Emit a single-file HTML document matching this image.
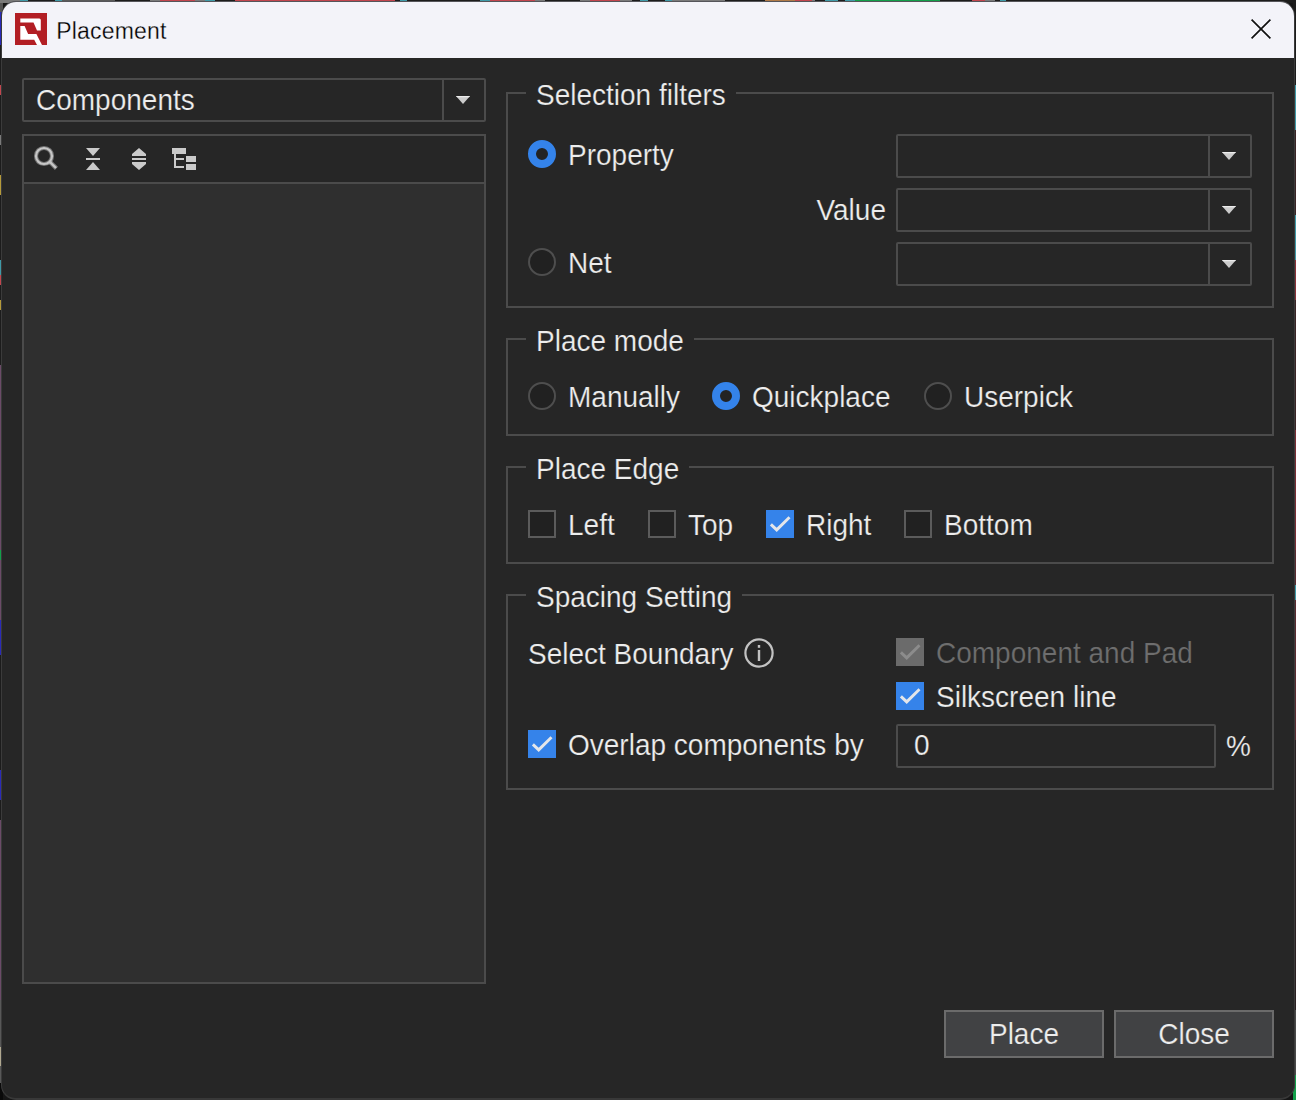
<!DOCTYPE html>
<html lang="en">
<head>
<meta charset="utf-8">
<title>Placement</title>
<style>
html,body{margin:0;padding:0;}
body{width:1296px;height:1100px;position:relative;overflow:hidden;background:#161616;
  font-family:"Liberation Sans",Arial,sans-serif;font-size:28px;color:#ededed;}
.abs{position:absolute;box-sizing:border-box;}
#edge-top{left:0;top:0;width:1296px;height:3px;background:linear-gradient(to right,#7a7a7a 0px,#7a7a7a 20px,#3f9aa8 20px,#3f9aa8 28px,#1c1c1c 28px,#1c1c1c 55px,#3f9aa8 55px,#3f9aa8 62px,#5a5a5a 62px,#5a5a5a 115px,#1c1c1c 115px,#1c1c1c 150px,#7a7a7a 150px,#7a7a7a 160px,#c2464e 160px,#c2464e 195px,#7a7a7a 195px,#7a7a7a 205px,#3f9aa8 205px,#3f9aa8 215px,#1c1c1c 215px,#1c1c1c 235px,#c2464e 235px,#c2464e 395px,#1c1c1c 395px,#1c1c1c 400px,#3f9aa8 400px,#3f9aa8 407px,#1c1c1c 407px,#1c1c1c 480px,#3f9aa8 480px,#3f9aa8 490px,#c2464e 490px,#c2464e 535px,#7a7a7a 535px,#7a7a7a 545px,#1c1c1c 545px,#1c1c1c 580px,#7a7a7a 580px,#7a7a7a 590px,#c2464e 590px,#c2464e 620px,#7a7a7a 620px,#7a7a7a 632px,#1c1c1c 632px,#1c1c1c 640px,#3f9aa8 640px,#3f9aa8 648px,#1c1c1c 648px,#1c1c1c 665px,#3f9aa8 665px,#3f9aa8 672px,#7a7a7a 672px,#7a7a7a 725px,#1c1c1c 725px,#1c1c1c 765px,#b07a48 765px,#b07a48 795px,#c2464e 795px,#c2464e 812px,#7a7a7a 812px,#7a7a7a 815px,#1c1c1c 815px,#1c1c1c 825px,#3f9aa8 825px,#3f9aa8 838px,#1c1c1c 838px,#1c1c1c 845px,#3f9aa8 845px,#3f9aa8 855px,#12a04a 855px,#12a04a 940px,#1c1c1c 940px,#1c1c1c 972px,#c2464e 972px,#c2464e 985px,#7a7a7a 985px,#7a7a7a 995px,#1c1c1c 995px,#1c1c1c 1000px,#3f9aa8 1000px,#3f9aa8 1006px,#1c1c1c 1006px,#1c1c1c 1296px);}
#edge-left{left:0;top:3px;width:3px;height:1097px;background:linear-gradient(to bottom,#555 0px,#555 12px,#2a2ab8 12px,#2a2ab8 45px,#1c1c1c 45px,#1c1c1c 85px,#c2464e 85px,#c2464e 95px,#1c1c1c 95px,#1c1c1c 135px,#7a7a7a 135px,#7a7a7a 145px,#1c1c1c 145px,#1c1c1c 175px,#b59a3a 175px,#b59a3a 195px,#1c1c1c 195px,#1c1c1c 260px,#3f9aa8 260px,#3f9aa8 275px,#c2464e 275px,#c2464e 285px,#1c1c1c 285px,#1c1c1c 300px,#b59a3a 300px,#b59a3a 310px,#1c1c1c 310px,#1c1c1c 365px,#6b4b68 365px,#6b4b68 550px,#12a04a 550px,#12a04a 560px,#6b4b68 560px,#6b4b68 620px,#2a2ab8 620px,#2a2ab8 655px,#1c1c1c 655px,#1c1c1c 770px,#2a2ab8 770px,#2a2ab8 800px,#1c1c1c 800px,#1c1c1c 820px,#6b4b68 820px,#6b4b68 1000px,#585858 1000px,#585858 1047px,#b0a890 1047px,#b0a890 1066px,#585858 1066px,#585858 1083px,#0a0a0a 1083px,#0a0a0a 1100px);background-position:0 -3px;background-size:3px 1100px;}
#edge-right{left:1293px;top:3px;width:3px;height:1097px;background:linear-gradient(to bottom,#1c1c1c 0px,#1c1c1c 85px,#3f9aa8 85px,#3f9aa8 130px,#3a2426 130px,#3a2426 215px,#3f9aa8 215px,#3f9aa8 260px,#8a3038 260px,#8a3038 300px,#3a2426 300px,#3a2426 430px,#7a2c34 430px,#7a2c34 550px,#5a2a30 550px,#5a2a30 585px,#3f9aa8 585px,#3f9aa8 600px,#5a2a30 600px,#5a2a30 740px,#2a2022 740px,#2a2022 1010px,#4a4a4a 1010px,#4a4a4a 1075px,#12a04a 1075px,#12a04a 1100px);background-position:0 -3px;background-size:3px 1100px;}
#win{left:1px;top:1px;width:1294px;height:1099px;border:1px solid #3b3b3b;border-bottom:2px solid #383838;border-top-color:#55555a;border-radius:15px;background:#262626;overflow:hidden;}
#pg{position:absolute;left:-2px;top:-2px;width:1296px;height:1100px;}
#titlebar{left:2px;top:2px;width:1292px;height:56px;background:#f3f3f9;}
#title{-webkit-text-stroke:0.28px #f3f3f9;letter-spacing:0.18px;left:56.3px;top:15px;height:32px;line-height:32px;font-size:23px;color:#000;white-space:nowrap;}
.t{-webkit-text-stroke:0.22px #262626;white-space:nowrap;height:40px;line-height:40px;margin-left:-1px;transform:translateY(2px) scaleY(1.025);transform-origin:0 29.7px;}
.box{border:2px solid #4b4b4b;}
.combo{border:2px solid #4b4b4b;border-radius:2px;height:44px;}
.combo .sep{position:absolute;top:0;width:2px;height:40px;background:#4b4b4b;}
.grp{border:2px solid #4b4b4b;}
.leg{background:#262626;height:40px;line-height:40px;white-space:nowrap;padding:0 10px 0 10px;}
.leg span{-webkit-text-stroke:0.22px #262626;}
.btn span{-webkit-text-stroke:0.22px #414244;}
.leg span,.btn span{display:block;transform:translateY(2px) scaleY(1.025);transform-origin:0 29.7px;}
.radio{width:28px;height:28px;border-radius:50%;border:2px solid #4e4e4e;background:#212121;}
.radio.on{border:8px solid #3483ea;background:#232323;}
.cb{width:28px;height:28px;border:2px solid #5b5b5b;background:#212121;}
.cb.on{border:none;background:#3583ea;}
.cb.dis{border:none;background:#6b6b6b;}
.btn{border:2px solid #6b6b6b;background:#414244;height:48px;width:160px;text-align:center;line-height:40px;padding-top:1px;}
svg{position:absolute;display:block;overflow:visible;}
</style>
</head>
<body>
<div id="edge-top" class="abs"></div>
<div id="edge-left" class="abs"></div>
<div id="edge-right" class="abs"></div>

<div id="win" class="abs"><div id="pg">

<!-- title bar -->
<div id="titlebar" class="abs"></div>
<svg style="left:15px;top:13px;filter:blur(0.35px)" width="32" height="32" viewBox="0 0 32 32">
  <rect width="32" height="32" fill="#b21e24"/>
  <path d="M5.3 5.6 H24.3 Q25.8 5.6 25.8 7.1 V17.4 H22 L18.5 9.6 H5.3 Z" fill="#fff"/>
  <path d="M5.3 13 H9.6 L13.1 21.1 H21.4 L27 32 H22 L19.2 26.7 H5.3 Z" fill="#fff"/>
</svg>
<div id="title" class="abs">Placement</div>
<svg style="left:1251px;top:19px" width="20" height="20" viewBox="0 0 20 20">
  <path d="M0.6 0.6 L19.4 19.4 M19.4 0.6 L0.6 19.4" stroke="#111" stroke-width="1.7" fill="none"/>
</svg>

<!-- left: components combo -->
<div class="abs combo" style="left:22px;top:78px;width:464px;">
  <div class="sep" style="left:418px"></div>
</div>
<div class="abs t" style="left:37px;top:79px;">Components</div>
<svg style="left:456px;top:96px" width="14" height="8" viewBox="0 0 14 8"><path d="M0 0 H14 L7 8 Z" fill="#cbcbcb"/><path d="M0 0 H14 L13 1.2 H1 Z" fill="#ececec"/></svg>

<!-- left: list panel -->
<div class="abs box" style="left:22px;top:134px;width:464px;height:850px;background:#2f2f2f;"></div>
<div class="abs" style="left:24px;top:136px;width:460px;height:48px;background:#262626;border-bottom:2px solid #4b4b4b;"></div>

<!-- toolbar icons -->
<svg style="left:34px;top:146px" width="24" height="24" viewBox="0 0 24 24">
  <circle cx="10" cy="10" r="8" fill="none" stroke="#c6c6c6" stroke-opacity="0.5" stroke-width="4.2"/>
  <circle cx="10" cy="10" r="8" fill="none" stroke="#c6c6c6" stroke-width="2.2"/>
  <path d="M15.8 15.8 L22.4 22.4" stroke="#c6c6c6" stroke-opacity="0.5" stroke-width="4.4"/>
  <path d="M16 16 L22 22" stroke="#c6c6c6" stroke-width="2.4"/>
</svg>
<svg style="left:86px;top:148px" width="14" height="22" viewBox="0 0 14 22">
  <path d="M0 0 H14 L7 8 Z M0 10 H14 V12 H0 Z M0 22 H14 L7 14 Z" fill="#cacaca"/>
</svg>
<svg style="left:132px;top:148px" width="14" height="22" viewBox="0 0 14 22">
  <path d="M0 8 V6 L7 0 L14 6 V8 Z M0 10 H14 V12 H0 Z M0 14 V16 L7 22 L14 16 V14 Z" fill="#cacaca"/>
</svg>
<svg style="left:172px;top:148px" width="24" height="22" viewBox="0 0 24 22">
  <path d="M0 0 H14 V6 H0 Z M2 6 H4 V10 H12 V12 H4 V18 H12 V20 H2 Z M14 8 H24 V14 H14 Z M14 16 H24 V22 H14 Z" fill="#cacaca"/>
</svg>

<!-- group 1: Selection filters -->
<div class="abs grp" style="left:506px;top:92px;width:768px;height:216px;"></div>
<div class="abs leg" style="left:526px;top:74px;"><span>Selection filters</span></div>
<div class="abs radio on" style="left:528px;top:140px;"></div>
<div class="abs t" style="left:569px;top:134px;">Property</div>
<div class="abs t" style="left:702px;width:185px;text-align:right;top:189px;">Value</div>
<div class="abs radio" style="left:528px;top:248px;"></div>
<div class="abs t" style="left:569px;top:242px;">Net</div>
<div class="abs combo" style="left:896px;top:134px;width:356px;"><div class="sep" style="left:310px"></div></div>
<div class="abs combo" style="left:896px;top:188px;width:356px;"><div class="sep" style="left:310px"></div></div>
<div class="abs combo" style="left:896px;top:242px;width:356px;"><div class="sep" style="left:310px"></div></div>
<svg style="left:1222px;top:152px" width="14" height="8" viewBox="0 0 14 8"><path d="M0 0 H14 L7 8 Z" fill="#cbcbcb"/><path d="M0 0 H14 L13 1.2 H1 Z" fill="#ececec"/></svg>
<svg style="left:1222px;top:206px" width="14" height="8" viewBox="0 0 14 8"><path d="M0 0 H14 L7 8 Z" fill="#cbcbcb"/><path d="M0 0 H14 L13 1.2 H1 Z" fill="#ececec"/></svg>
<svg style="left:1222px;top:260px" width="14" height="8" viewBox="0 0 14 8"><path d="M0 0 H14 L7 8 Z" fill="#cbcbcb"/><path d="M0 0 H14 L13 1.2 H1 Z" fill="#ececec"/></svg>

<!-- group 2: Place mode -->
<div class="abs grp" style="left:506px;top:338px;width:768px;height:98px;"></div>
<div class="abs leg" style="left:526px;top:320px;"><span>Place mode</span></div>
<div class="abs radio" style="left:528px;top:382px;"></div>
<div class="abs t" style="left:569px;top:376px;">Manually</div>
<div class="abs radio on" style="left:712px;top:382px;"></div>
<div class="abs t" style="left:753px;top:376px;">Quickplace</div>
<div class="abs radio" style="left:924px;top:382px;"></div>
<div class="abs t" style="left:965px;top:376px;">Userpick</div>

<!-- group 3: Place Edge -->
<div class="abs grp" style="left:506px;top:466px;width:768px;height:98px;"></div>
<div class="abs leg" style="left:526px;top:448px;"><span>Place Edge</span></div>
<div class="abs cb" style="left:528px;top:510px;"></div>
<div class="abs t" style="left:569px;top:504px;">Left</div>
<div class="abs cb" style="left:648px;top:510px;"></div>
<div class="abs t" style="left:689px;top:504px;">Top</div>
<div class="abs cb on" style="left:766px;top:510px;"></div>
<svg style="left:766px;top:510px" width="28" height="28" viewBox="0 0 28 28"><path d="M4.9 14.4 L10.7 19.9 L23.5 7.2" stroke="#e4e6ea" stroke-width="2.9" fill="none"/></svg>
<div class="abs t" style="left:807px;top:504px;">Right</div>
<div class="abs cb" style="left:904px;top:510px;"></div>
<div class="abs t" style="left:945px;top:504px;">Bottom</div>

<!-- group 4: Spacing Setting -->
<div class="abs grp" style="left:506px;top:594px;width:768px;height:196px;"></div>
<div class="abs leg" style="left:526px;top:576px;"><span>Spacing Setting</span></div>
<div class="abs t" style="left:529px;top:633px;">Select Boundary</div>
<svg style="left:744px;top:638px" width="30" height="30" viewBox="0 0 30 30">
  <circle cx="15" cy="15" r="13.6" fill="none" stroke="#c2c2c2" stroke-width="2.2"/>
  <rect x="13.8" y="12" width="2.4" height="11" fill="#c2c2c2"/>
  <rect x="13.8" y="7" width="2.4" height="2.8" fill="#c2c2c2"/>
</svg>
<div class="abs cb dis" style="left:896px;top:638px;"></div>
<svg style="left:896px;top:638px" width="28" height="28" viewBox="0 0 28 28"><path d="M4.9 14.4 L10.7 19.9 L23.5 7.2" stroke="#8c8c8c" stroke-width="2.9" fill="none"/></svg>
<div class="abs t" style="left:937px;top:632px;color:#6e6e6e;">Component and Pad</div>
<div class="abs cb on" style="left:896px;top:682px;"></div>
<svg style="left:896px;top:682px" width="28" height="28" viewBox="0 0 28 28"><path d="M4.9 14.4 L10.7 19.9 L23.5 7.2" stroke="#e4e6ea" stroke-width="2.9" fill="none"/></svg>
<div class="abs t" style="left:937px;top:676px;">Silkscreen line</div>
<div class="abs cb on" style="left:528px;top:730px;"></div>
<svg style="left:528px;top:730px" width="28" height="28" viewBox="0 0 28 28"><path d="M4.9 14.4 L10.7 19.9 L23.5 7.2" stroke="#e4e6ea" stroke-width="2.9" fill="none"/></svg>
<div class="abs t" style="left:569px;top:724px;">Overlap components by</div>
<div class="abs combo" style="left:896px;top:724px;width:320px;"></div>
<div class="abs t" style="left:915px;top:724px;">0</div>
<div class="abs t" style="left:1227px;top:725px;">%</div>

<!-- buttons -->
<div class="abs btn" style="left:944px;top:1010px;"><span>Place</span></div>
<div class="abs btn" style="left:1114px;top:1010px;"><span>Close</span></div>

</div></div>
</body>
</html>
